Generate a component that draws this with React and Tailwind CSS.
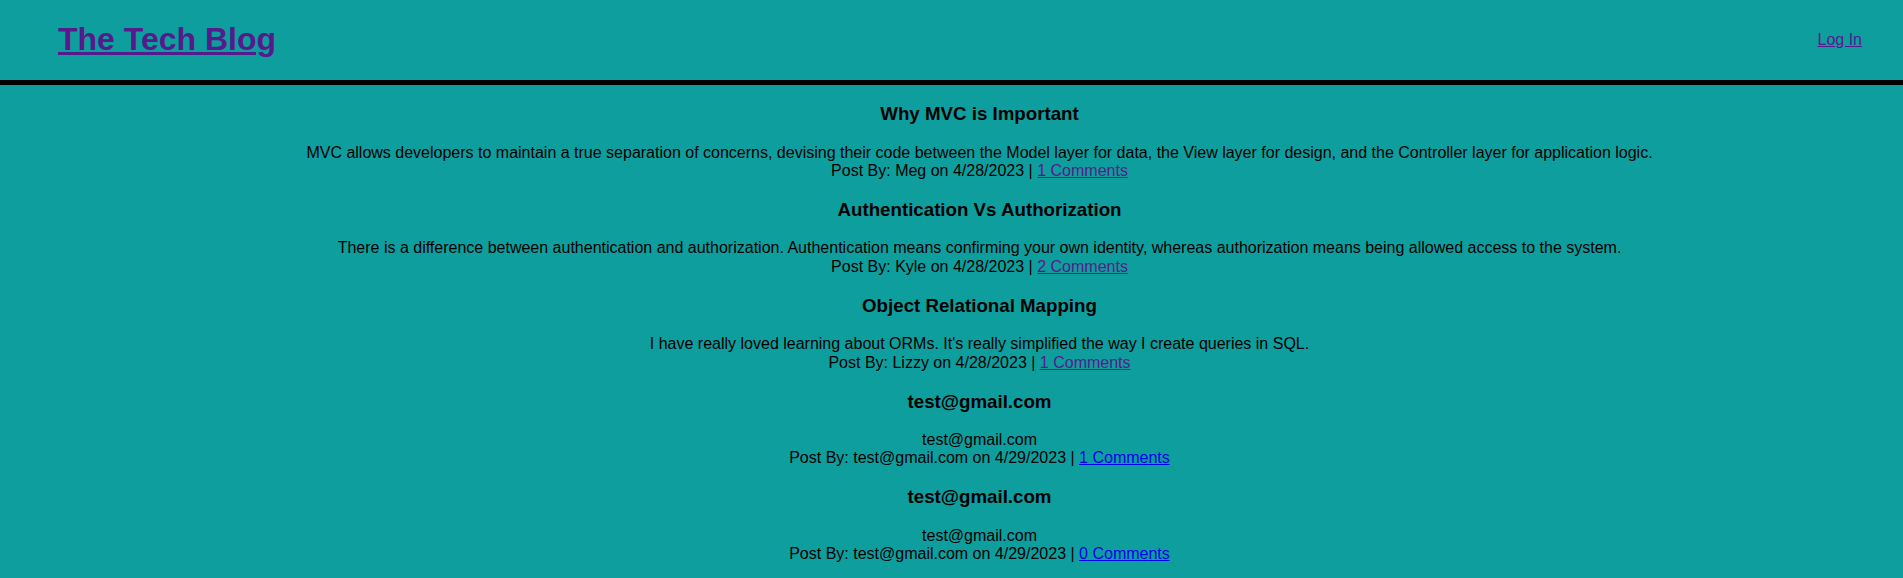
import React from "react";

const posts = [
  {
    title: "Why MVC is Important",
    body: "MVC allows developers to maintain a true separation of concerns, devising their code between the Model layer for data, the View layer for design, and the Controller layer for application logic.",
    by: "Meg",
    date: "4/28/2023",
    comments: "1 Comments",
    visited: true,
  },
  {
    title: "Authentication Vs Authorization",
    body: "There is a difference between authentication and authorization. Authentication means confirming your own identity, whereas authorization means being allowed access to the system.",
    by: "Kyle",
    date: "4/28/2023",
    comments: "2 Comments",
    visited: true,
  },
  {
    title: "Object Relational Mapping",
    body: "I have really loved learning about ORMs. It's really simplified the way I create queries in SQL.",
    by: "Lizzy",
    date: "4/28/2023",
    comments: "1 Comments",
    visited: true,
  },
  {
    title: "test@gmail.com",
    body: "test@gmail.com",
    by: "test@gmail.com",
    date: "4/29/2023",
    comments: "1 Comments",
    visited: false,
  },
  {
    title: "test@gmail.com",
    body: "test@gmail.com",
    by: "test@gmail.com",
    date: "4/29/2023",
    comments: "0 Comments",
    visited: false,
  },
];

export default function App() {
  return (
    <div
      className="min-h-[578px] bg-[#0f9e9e] text-black"
      style={{ fontFamily: '"Liberation Sans", Arial, sans-serif' }}
    >
      <header className="flex items-center justify-between border-b-[5px] border-black pl-[58px] pr-[41px]">
        <h1 className="my-[21.44px] text-[32px] leading-[36.8px] font-bold">
          <a href="#" className="text-[#551a8b] underline">
            The Tech Blog
          </a>
        </h1>
        <a href="#" className="text-[16px] text-[#551a8b] underline">
          Log In
        </a>
      </header>
      <main className="pl-[56px] text-center">
        {posts.map((p, i) => (
          <article key={i}>
            <h3 className="my-[18.72px] text-[18.72px] leading-[21.5px] font-bold">
              {p.title}
            </h3>
            <p className="text-[16px] leading-[18.4px]">{p.body}</p>
            <p className="text-[16px] leading-[18.4px]">
              Post By: {p.by} on {p.date} |{" "}
              <a
                href="#"
                className={
                  p.visited
                    ? "text-[#551a8b] underline"
                    : "text-[#0000ee] underline"
                }
              >
                {p.comments}
              </a>
            </p>
          </article>
        ))}
      </main>
    </div>
  );
}
